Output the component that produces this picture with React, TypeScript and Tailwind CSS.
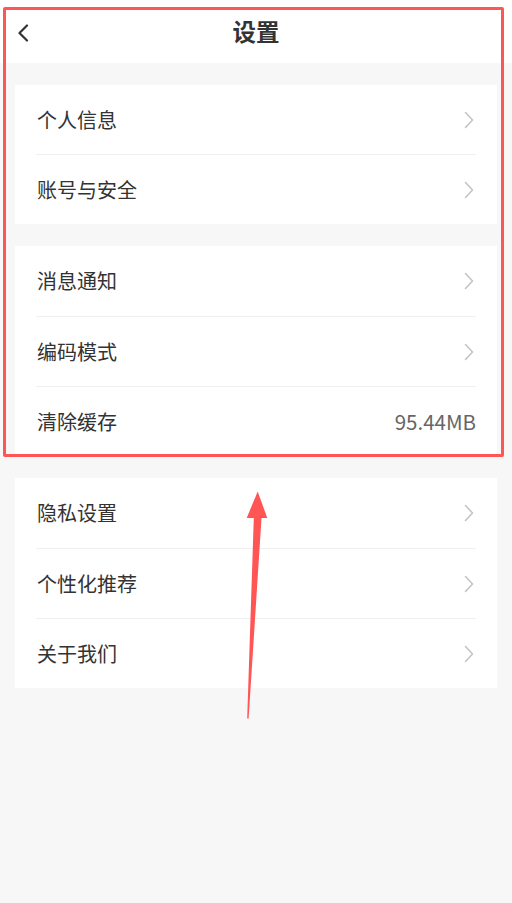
import React from "react";

const Chevron = () => (
  <svg width="10" height="18" viewBox="0 0 10 18" fill="none" className="shrink-0">
    <path d="M1.5 1.5 L8.5 9 L1.5 16.5" stroke="#c4c4c4" strokeWidth="1.6" strokeLinecap="round" strokeLinejoin="round" />
  </svg>
);

type Item = { label: string; value?: string };

const Group = ({ items, first }: { items: Item[]; first?: boolean }) => (
  <div className="mx-[15px] bg-white px-[21px]">
    {items.map((it, i) => (
      <div
        key={it.label}
        className={`flex items-center justify-between ${first && i === 0 ? "h-[69px]" : "h-[70px]"} ${i > 0 ? "border-t border-[#efefef]" : ""}`}
      >
        <span className="pl-px text-[20px] text-[#333333]">{it.label}</span>
        {it.value ? (
          <span className="text-[20.5px] text-[#666666]">{it.value}</span>
        ) : (
          <span className="pr-[2px]"><Chevron /></span>
        )}
      </div>
    ))}
  </div>
);

export default function App() {
  return (
    <div
      className="relative min-h-[903px] w-[512px] bg-[#f7f7f7]"
      style={{ fontFamily: '"Noto Sans CJK SC", "Noto Sans", sans-serif' }}
    >
      <div className="relative flex h-[63px] items-center justify-center bg-white">
        <svg width="12" height="18" viewBox="0 0 12 18" className="absolute left-[17px] top-[24px]">
          <path d="M10 1.5 L2.5 9 L10 16.5" stroke="#333" strokeWidth="2.2" fill="none" strokeLinecap="round" strokeLinejoin="round" />
        </svg>
        <span className="text-[23.5px] font-bold text-[#333333]">设置</span>
      </div>
      <div className="flex flex-col gap-[22px] pt-[22px]">
        <Group first items={[{ label: "个人信息" }, { label: "账号与安全" }]} />
        <Group items={[{ label: "消息通知" }, { label: "编码模式" }, { label: "清除缓存", value: "95.44MB" }]} />
        <Group items={[{ label: "隐私设置" }, { label: "个性化推荐" }, { label: "关于我们" }]} />
      </div>

      {/* annotation box */}
      <div className="pointer-events-none absolute left-[3px] top-[7px] h-[450px] w-[501px] rounded-[2px] border-[3px] border-[#ff5555]" />

      {/* annotation arrow */}
      <svg className="pointer-events-none absolute left-0 top-0" width="512" height="903">
        <polygon points="257.7,491.5 267.3,518 261.5,518 248.6,718.5 247.2,718.5 253.8,518 246.7,518" fill="#ff5555" />
      </svg>
    </div>
  );
}
